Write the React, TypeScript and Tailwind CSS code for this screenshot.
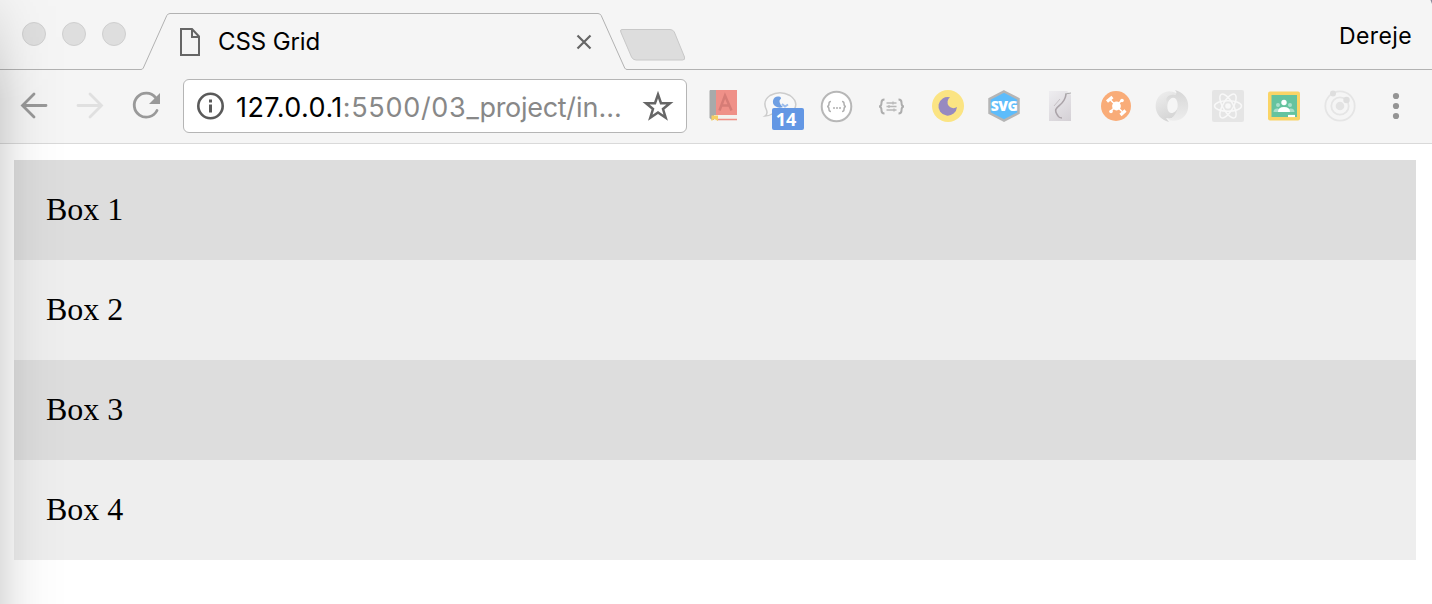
import React from "react";

const sans = "font-['Inter','Roboto',sans-serif]";

function Slot({ x, label, children }: { x: number; label: string; children: React.ReactNode }) {
  return (
    <button aria-label={label} className="relative block h-[73px] w-14 shrink-0">
      <svg viewBox={`${x} 70 56 73`} className="block h-[73px] w-14" fill="none">
        {children}
      </svg>
    </button>
  );
}

function TabStrip() {
  return (
    <header className="relative flex h-[70px] shrink-0 items-start">
      <svg className="absolute inset-0 h-[70px] w-[1432px]" viewBox="0 0 1432 70" fill="none">
        <path d="M0 69.5H141Q142.500 69.500 143.300 68L166.800 15.500Q168 13.500 170 13.500H598Q600 13.500 601.200 15.500L624.700 68Q625.500 69.500 627 69.500H1432" stroke="#b2b2b2" />
        <path d="M622 29.500H670Q673 29.500 674.300 32L684.500 57Q685.500 60 682.500 60H636Q633 60 631.500 57L620.800 32Q619.800 29.500 622 29.500Z" fill="#ddd" stroke="#c8c8c8" />
        <path d="M1430.500 0H1432V4Z" fill="#889" />
      </svg>
      <div className="flex gap-4 pt-[22px] pl-[22px]">
        <span className="size-6 rounded-full border border-[#cfcfcf] bg-[#dedede]" />
        <span className="size-6 rounded-full border border-[#cfcfcf] bg-[#dedede]" />
        <span className="size-6 rounded-full border border-[#cfcfcf] bg-[#dedede]" />
      </div>
      <div className="relative mt-[14px] ml-[54px] flex h-14 w-[412px] items-center">
        <svg className="h-7 w-5 shrink-0" viewBox="180 28 20 28" fill="none" stroke="#666" strokeWidth="2">
          <path d="M181 29H192L199 36.500V55H181Z" />
          <path d="M192 29V37H199" />
        </svg>
        <span className="ml-[18px] text-[24px] leading-7 tracking-[-0.1px] text-black">CSS Grid</span>
        <svg className="ml-auto h-4 w-4" viewBox="576 34 16 16" stroke="#666" strokeWidth="2.200">
          <path d="M577.500 35.500L590.500 48.500M590.500 35.500L577.500 48.500" />
        </svg>
      </div>
      <span className="relative mt-[22px] mr-[20px] ml-auto text-[23px] leading-7 tracking-[0.4px] text-black">Dereje</span>
    </header>
  );
}

function AddressBar() {
  return (
    <div className="mb-px ml-[9px] flex h-[54px] w-[504px] shrink-0 items-center rounded-md border border-[#b5b5b5] bg-white pl-[13px]">
      <svg className="h-7 w-7 shrink-0" viewBox="197 93 28 28" fill="none">
        <circle cx="210.500" cy="107" r="12.200" stroke="#5a5a5a" strokeWidth="2.600" />
        <path d="M209 105.500H212V113.500H209ZM209 100.500H212V103.500H209Z" fill="#5a5a5a" />
      </svg>
      <span className="mt-[3px] ml-[11px] w-[406px] shrink-0 text-[27px] leading-8 whitespace-nowrap text-[#888]">
        <span className="tracking-[0.45px] text-black">127.0.0.1</span><span className="tracking-[0.7px]">:5500/03_</span><span className="tracking-[-0.3px]">project</span><span>/in...</span>
      </span>
      <svg className="h-8 w-8 shrink-0" viewBox="642 90 32 32" fill="none" stroke="#666" strokeWidth="2.500">
        <path d="M658 94.500L661 103.200H670L663 109L665.700 117.700L658 112.500L650.300 117.700L653 109L646 103.200H655Z" />
      </svg>
    </div>
  );
}

function Toolbar() {
  return (
    <div className="flex h-[74px] shrink-0 items-center border-b border-[#d9d9d9] pl-[6px]">
      <Slot x={6} label="Back">
        <path d="M46 105.500H23M34 94L22.500 105.500L34 117" stroke="#999" strokeWidth="2.800" strokeLinecap="round" />
      </Slot>
      <Slot x={62} label="Forward">
        <path d="M78 105.500H101M90 94L101.500 105.500L90 117" stroke="#e0e0e0" strokeWidth="2.800" strokeLinecap="round" />
      </Slot>
      <Slot x={118} label="Reload">
        <path d="M155.500 97.500A12 12 0 1 0 157 110.500" stroke="#999" strokeWidth="2.800" strokeLinecap="round" />
        <path d="M160 93V104H149Z" fill="#999" />
      </Slot>
      <AddressBar />
      <div className="ml-[9px] flex">
        <Slot x={696} label="Dictionary">
          <path d="M710 90H737V120H712L709.500 118V91Z" fill="#a7aaaa" />
          <path d="M716 90H737V115H716Z" fill="#ef9088" />
          <path d="M714 115H737V121H714Z" fill="#f3f1ee" />
          <path d="M717 119.500H737" stroke="#ef9088" strokeWidth="1.500" />
          <path d="M719.500 110.500L725 95.500L731.500 110.500M722 105.500H729" stroke="#d67c76" strokeWidth="2.500" />
          <path d="M711.500 115.500H718V121L714.500 119L711.500 121Z" fill="#f5cf63" />
        </Slot>
        <div className="relative">
          <Slot x={752} label="Chat">
            <path d="M765 116Q768 114 766.500 110Q762 101 770 95.500Q780 90 790 95.500Q799 102 794 110Q786 118 772 114Q769 116 765 116Z" fill="#f8f8f8" stroke="#ccc" strokeWidth="1.500" />
            <path d="M779 96.500C773 95.500 771 103 775 106Q779 109 783 107Q777 102 781 98.500Q781 96.500 779 96.500Z" fill="#6f9fe3" />
            <path d="M782 104L785 106.500L788 104.500" stroke="#9bbcec" strokeWidth="2" />
          </Slot>
          <span className="absolute top-[38px] left-5 h-[22px] w-8 rounded-[2px] bg-[#6397e4] pr-1 text-center font-['Open_Sans',sans-serif] text-[18px] leading-[23px] font-bold text-white">14</span>
        </div>
        <Slot x={808} label="JSON">
          <circle cx="836.500" cy="106.500" r="14.800" fill="#fff" stroke="#b7b7b7" strokeWidth="2" />
          <path d="M831 101.500Q829 101.500 829 103.500Q829 106.500 827 106.500Q829 106.500 829 109.500Q829 111.500 831 111.500M842 101.500Q844 101.500 844 103.500Q844 106.500 846 106.500Q844 106.500 844 109.500Q844 111.500 842 111.500" stroke="#b0b0b0" strokeWidth="1.500" />
          <path d="M833 108H835M836 108H838M839 108H841" stroke="#b0b0b0" strokeWidth="1.500" />
        </Slot>
        <Slot x={864} label="Formatter">
          <path d="M884.500 99.500Q881.500 99.500 881.500 102.500Q881.500 106.500 879 106.500Q881.500 106.500 881.500 110.500Q881.500 113.500 884.500 113.500M898.500 99.500Q901.500 99.500 901.500 102.500Q901.500 106.500 904 106.500Q901.500 106.500 901.500 110.500Q901.500 113.500 898.500 113.500" stroke="#adadad" strokeWidth="2" />
          <path d="M886.500 103H896.500M886.500 106.500H896.500M886.500 110H896.500M893 101.500V104.500M889 105V108M894 108.500V111.500" stroke="#b8b8b8" strokeWidth="1.300" />
        </Slot>
        <Slot x={920} label="Night mode">
          <circle cx="948" cy="106" r="16" fill="#fbe483" />
          <path d="M950 97.300A9.300 9.300 0 1 0 957 107A5.900 5.900 0 0 1 950 97.300Z" fill="#978ac0" />
        </Slot>
        <div className="relative">
          <Slot x={976} label="SVG">
            <path d="M1004 91.500L1018.500 99V113L1004 120.500L989.500 113V99Z" fill="#5dbcfb" stroke="#b5b5b5" strokeWidth="2.500" />
          </Slot>
          <span className="absolute top-[26px] left-[11px] w-[34px] text-center font-['Open_Sans',sans-serif] text-[14px] leading-5 font-extrabold tracking-[-0.5px] text-white">SVG</span>
        </div>
        <Slot x={1032} label="Curves">
          <path d="M1049 91H1067L1071 95V121H1049Z" fill="url(#paper)" />
          <path d="M1066 94C1065 108 1050 105 1058 116Q1059 118 1062 118" stroke="#aaa3a8" strokeWidth="1.600" />
          <path d="M1054 106L1060 99" stroke="#c6c0c5" />
          <path d="M1065 94L1071 93" stroke="#aaa" />
          <defs><linearGradient id="paper" x1="1049" y1="91" x2="1071" y2="121" gradientUnits="userSpaceOnUse"><stop stopColor="#eeedf0" /><stop offset="1" stopColor="#d4d0d5" /></linearGradient></defs>
        </Slot>
        <Slot x={1088} label="Hub">
          <circle cx="1116" cy="106" r="15" fill="#f9ac78" />
          <path d="M1110.500 100L1122 111.500M1121.500 100.500L1111 111" stroke="#fff" strokeWidth="1.600" />
          <circle cx="1116.500" cy="106" r="4.400" fill="#fff" />
          <circle cx="1122" cy="100.500" r="1.800" fill="#fff" />
          <circle cx="1111" cy="111.500" r="1.800" fill="#fff" />
          <path d="M1107 101.500L1112.500 97M1120.500 115L1125.500 110.500" stroke="#fff" strokeWidth="3.200" />
        </Slot>
        <Slot x={1144} label="JSON viewer">
          <defs><linearGradient id="ringA" x1="1157" y1="95" x2="1170" y2="120" gradientUnits="userSpaceOnUse"><stop stopColor="#ececec" /><stop offset="1" stopColor="#d4d4d4" /></linearGradient><linearGradient id="ringB" x1="1175" y1="90" x2="1175" y2="120" gradientUnits="userSpaceOnUse"><stop stopColor="#d6d6d6" /><stop offset="1" stopColor="#ececec" /></linearGradient></defs>
          <path d="M1169 122C1153 118 1152 99 1163 93Q1170 89 1178 94C1169 95 1165 106 1169 112C1172 115 1177 111 1178 107C1180 115 1173 120 1166 118Z" fill="url(#ringA)" />
          <path d="M1175 90C1191 94 1192 113 1181 119Q1176 122 1168 120C1177 117 1180 105 1176 99Q1172 95 1167 103C1165 98 1168 94 1175 95Q1178 93 1175 90Z" fill="url(#ringB)" />
        </Slot>
        <Slot x={1200} label="React">
          <rect x="1212" y="90" width="32" height="32" rx="2" fill="#e5e5e5" />
          <circle cx="1228" cy="106" r="2.800" fill="#f8f8f8" />
          <g stroke="#f8f8f8" strokeWidth="1.500">
            <ellipse cx="1228" cy="106" rx="13.500" ry="5.200" />
            <ellipse cx="1228" cy="106" rx="13.500" ry="5.200" transform="rotate(60 1228 106)" />
            <ellipse cx="1228" cy="106" rx="13.500" ry="5.200" transform="rotate(120 1228 106)" />
          </g>
        </Slot>
        <Slot x={1256} label="Classroom">
          <rect x="1268" y="91.500" width="32" height="29" rx="2" fill="#fad466" />
          <rect x="1271.500" y="95" width="25.500" height="22" fill="#65c39f" />
          <circle cx="1278" cy="105" r="2" fill="#a9dfcb" /><circle cx="1290" cy="105" r="2" fill="#a9dfcb" />
          <path d="M1273.500 112Q1273.500 108 1278 108.500L1284 112ZM1284 112L1290 108.500Q1294.500 108 1294.500 112Z" fill="#a9dfcb" />
          <circle cx="1284" cy="102.500" r="2.700" fill="#fff" />
          <path d="M1278 112Q1278 107 1284 107Q1290 107 1290 112Z" fill="#fff" />
          <path d="M1288 116H1295" stroke="#fff" strokeWidth="2.200" />
        </Slot>
        <Slot x={1312} label="Orbit">
          <circle cx="1340" cy="106" r="14.700" stroke="#e5e5e5" strokeWidth="1.800" />
          <circle cx="1340" cy="106" r="8.700" stroke="#e5e5e5" strokeWidth="1.800" />
          <circle cx="1340" cy="106" r="4.300" fill="#e3e3e3" />
          <circle cx="1333" cy="93.500" r="3" fill="#dedede" /><circle cx="1346.500" cy="100" r="3.200" fill="#dedede" />
        </Slot>
        <Slot x={1368} label="Menu">
          <g fill="#949494"><circle cx="1396" cy="96" r="3.100" /><circle cx="1396" cy="106" r="3.100" /><circle cx="1396" cy="116" r="3.100" /></g>
        </Slot>
      </div>
    </div>
  );
}

export default function App() {
  return (
    <div className={`relative flex h-[604px] w-[1432px] flex-col overflow-hidden bg-white ${sans}`}>
      <div className="bg-[#f5f5f5]">
        <TabStrip />
        <Toolbar />
      </div>
      <main className="grid grid-cols-1 grid-rows-[repeat(4,100px)] pt-4 pr-4 pl-[14px] font-['Liberation_Serif',serif] text-[32px] leading-9 text-black">
        <div className="bg-[#ddd] px-8 pt-[31px]">Box 1</div>
        <div className="bg-[#eee] px-8 pt-[31px]">Box 2</div>
        <div className="bg-[#ddd] px-8 pt-[31px]">Box 3</div>
        <div className="bg-[#eee] px-8 pt-[31px]">Box 4</div>
      </main>
      <div className="pointer-events-none absolute inset-y-0 left-0 w-[68px] bg-[linear-gradient(to_right,rgba(0,0,0,0.125),rgba(0,0,0,0.065)_14px,rgba(0,0,0,0.03)_28px,rgba(0,0,0,0.01)_44px,transparent)] [mask-image:linear-gradient(to_bottom,rgba(0,0,0,0.2),black_100px)]" />
    </div>
  );
}
